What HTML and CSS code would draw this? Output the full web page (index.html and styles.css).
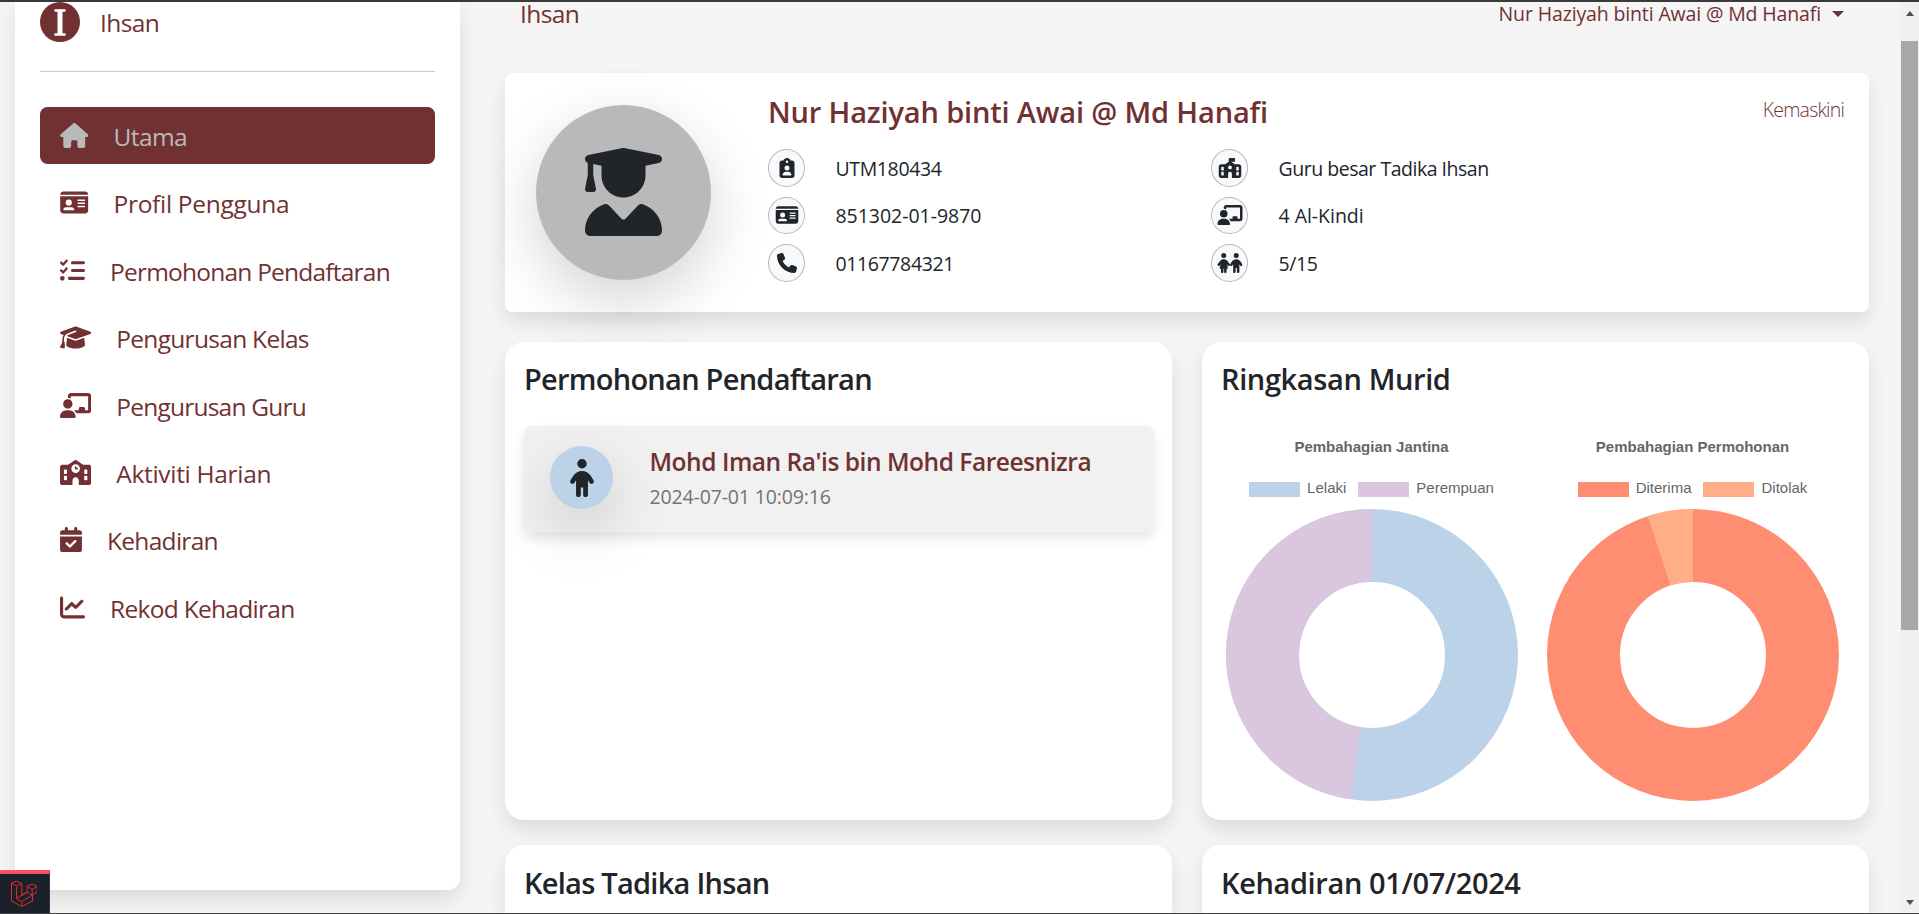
FILE: index.html
```
<!DOCTYPE html>
<html lang="ms">
<head>
<meta charset="utf-8">
<title>Ihsan</title>
<link rel="stylesheet" href="styles.css">
</head>
<body>
<svg class="sprite" aria-hidden="true">
  <symbol id="house" viewBox="0 0 576 512"><path d="M575.8 255.5c0 18-15 32.1-32 32.1h-32l.7 160.2c0 2.7-.2 5.4-.5 8.1V472c0 22.1-17.9 40-40 40H392c-22.1 0-40-17.9-40-40V384c0-17.7-14.3-32-32-32H256c-17.7 0-32 14.3-32 32v88c0 22.1-17.9 40-40 40H104c-22.1 0-40-17.9-40-40V287.6H32c-18 0-32-14-32-32.1c0-9 3-17 10-24L266.4 8c7-7 15-8 22-8s15 2 21 7L564.8 231.5c8 7 12 15 11 24z"/></symbol>
  <symbol id="idcard" viewBox="0 0 576 512"><path fill-rule="evenodd" d="M0 96H576c0-35.300-28.700-64-64-64H64C28.700 32 0 60.700 0 96zM0 128V416c0 35.300 28.700 64 64 64H512c35.300 0 64-28.700 64-64V128H0zM64 405.300c0-29.500 23.900-53.300 53.300-53.300H234.700c29.500 0 53.300 23.900 53.300 53.300c0 5.900-4.800 10.700-10.700 10.700H74.700c-5.900 0-10.700-4.800-10.700-10.700zM176 192a64 64 0 1 1 0 128 64 64 0 1 1 0-128zM352 208c0-8.800 7.200-16 16-16H496c8.800 0 16 7.200 16 16s-7.200 16-16 16H368c-8.800 0-16-7.200-16-16zM352 272c0-8.800 7.200-16 16-16H496c8.800 0 16 7.200 16 16s-7.200 16-16 16H368c-8.800 0-16-7.200-16-16zM352 336c0-8.800 7.200-16 16-16H496c8.800 0 16 7.200 16 16s-7.200 16-16 16H368c-8.800 0-16-7.200-16-16z"/></symbol>
  <symbol id="listcheck" viewBox="0 0 512 512"><path d="M152.100 38.200c9.900 8.900 10.700 24 1.800 33.900l-72 80c-4.400 4.900-10.600 7.800-17.200 7.900s-12.900-2.400-17.600-7L7 113C-2.300 103.600-2.300 88.400 7 79s24.600-9.400 33.900 0l22.100 22.100 55.100-61.200c8.900-9.900 24-10.700 33.900-1.800zM152.100 198.200c9.900 8.900 10.700 24 1.800 33.900l-72 80c-4.400 4.900-10.600 7.800-17.200 7.900s-12.900-2.400-17.600-7L7 273c-9.300-9.400-9.300-24.600 0-34s24.600-9.400 33.900 0l22.100 22.100 55.100-61.200c8.900-9.900 24-10.700 33.900-1.800zM224 96c0-17.700 14.300-32 32-32H480c17.700 0 32 14.300 32 32s-14.300 32-32 32H256c-17.700 0-32-14.300-32-32zM224 256c0-17.700 14.300-32 32-32H480c17.700 0 32 14.300 32 32s-14.300 32-32 32H256c-17.700 0-32-14.300-32-32zM160 416c0-17.700 14.300-32 32-32H480c17.700 0 32 14.300 32 32s-14.300 32-32 32H192c-17.700 0-32-14.300-32-32zM48 368a48 48 0 1 1 0 96 48 48 0 1 1 0-96z"/></symbol>
  <symbol id="gradcap" viewBox="0 0 640 512"><path d="M320 32c-8.100 0-16.100 1.400-23.700 4.100L15.800 137.400C6.300 140.900 0 149.900 0 160s6.300 19.100 15.800 22.600l57.900 20.900C57.300 229.300 48 259.800 48 291.900v28.100c0 28.400-10.800 57.700-22.300 80.800c-6.500 13-13.900 25.800-22.500 37.600C0 442.700-.9 448.300 .9 453.400s6 8.900 11.200 10.200l64 16c4.200 1.100 8.700 .3 12.400-2s6.300-6.100 7.100-10.400c8.600-42.800 4.300-81.200-2.100-108.700C90.300 344.300 86 329.800 80 316.500V291.900c0-30.200 10.200-58.700 27.900-81.500c12.900-15.500 29.600-28 49.200-35.700l157-61.700c8.200-3.200 17.500 .8 20.700 9s-.8 17.500-9 20.700l-157 61.700c-12.400 4.900-23.300 12.400-32.200 21.600l159.600 57.600c7.600 2.700 15.600 4.100 23.700 4.100s16.100-1.400 23.700-4.100L624.200 182.600c9.500-3.400 15.800-12.500 15.800-22.600s-6.300-19.100-15.800-22.600L343.700 36.100C336.100 33.400 328.100 32 320 32zM128 408c0 35.300 86 72 192 72s192-36.700 192-72L496.700 262.600 354.500 314c-11.100 4-22.800 6-34.500 6s-23.500-2-34.500-6L143.300 262.600 128 408z"/></symbol>
  <symbol id="teacher" viewBox="0 0 640 512"><path d="M160 64c0-35.300 28.700-64 64-64H576c35.300 0 64 28.700 64 64V352c0 35.300-28.700 64-64 64H336.800c-11.800-25.500-29.900-47.500-52.400-64H384V320c0-17.700 14.300-32 32-32h64c17.700 0 32 14.300 32 32v32h64V64H224v49.100C205.200 102.200 183.300 96 160 96V64zm0 64a96 96 0 1 1 0 192 96 96 0 1 1 0-192zM133.300 352h53.300C260.300 352 320 411.700 320 485.300c0 14.700-11.900 26.700-26.700 26.700H26.700C11.900 512 0 500.100 0 485.300C0 411.700 59.700 352 133.300 352z"/></symbol>
  <symbol id="school" viewBox="0 0 640 512"><path fill-rule="evenodd" d="M337.800 5.400C327-1.800 313-1.800 302.200 5.400L166.300 96H48C21.500 96 0 117.500 0 144V464c0 26.500 21.500 48 48 48H256V416c0-35.300 28.700-64 64-64s64 28.700 64 64v96H592c26.500 0 48-21.500 48-48V144c0-26.500-21.500-48-48-48H473.700L337.800 5.400zM96 192h32c8.800 0 16 7.200 16 16v64c0 8.800-7.200 16-16 16H96c-8.800 0-16-7.200-16-16V208c0-8.800 7.200-16 16-16zM512 192h32c8.800 0 16 7.200 16 16v64c0 8.800-7.200 16-16 16H512c-8.800 0-16-7.200-16-16V208c0-8.800 7.200-16 16-16zM96 320h32c8.800 0 16 7.200 16 16v64c0 8.800-7.200 16-16 16H96c-8.800 0-16-7.200-16-16V336c0-8.800 7.200-16 16-16zM512 320h32c8.800 0 16 7.200 16 16v64c0 8.800-7.200 16-16 16H512c-8.800 0-16-7.200-16-16V336c0-8.800 7.200-16 16-16zM232 176a88 88 0 1 1 176 0 88 88 0 1 1 -176 0zM320 128c-8.800 0-16 7.200-16 16v32c0 8.800 7.200 16 16 16h32c8.800 0 16-7.200 16-16s-7.200-16-16-16H336V144c0-8.800-7.200-16-16-16z"/></symbol>
  <symbol id="calendar" viewBox="0 0 448 512"><path fill-rule="evenodd" d="M128 0c17.700 0 32 14.300 32 32V64H288V32c0-17.700 14.300-32 32-32s32 14.300 32 32V64h48c26.500 0 48 21.500 48 48v48H0V112C0 85.500 21.500 64 48 64H96V32c0-17.700 14.300-32 32-32zM0 192H448V464c0 26.500-21.500 48-48 48H48c-26.500 0-48-21.500-48-48V192zM329 305c9.400-9.400 9.400-24.600 0-33.900s-24.600-9.400-33.900 0l-95 95-47-47c-9.400-9.400-24.600-9.400-33.900 0s-9.400 24.600 0 33.900l64 64c9.400 9.400 24.600 9.400 33.900 0L329 305z"/></symbol>
  <symbol id="chart" viewBox="0 0 512 512"><path d="M64 64c0-17.700-14.300-32-32-32S0 46.300 0 64V400c0 44.200 35.800 80 80 80H480c17.700 0 32-14.300 32-32s-14.300-32-32-32H80c-8.800 0-16-7.200-16-16V64zm406.600 86.600c12.500-12.500 12.500-32.800 0-45.300s-32.800-12.500-45.300 0L320 210.700l-57.400-57.400c-12.500-12.500-32.800-12.500-45.300 0l-112 112c-12.500 12.500-12.500 32.800 0 45.300s32.800 12.500 45.300 0L240 221.300l57.400 57.400c12.500 12.500 32.800 12.500 45.300 0l128-128z"/></symbol>
  <symbol id="graduate" viewBox="0 0 448 512"><path d="M219.300 .5c3.100-.6 6.300-.6 9.400 0l200 40C439.900 42.700 448 52.600 448 64s-8.100 21.300-19.300 23.500L352 102.900V160c0 70.700-57.300 128-128 128S96 230.700 96 160V102.900L48 93.300v65.100l15.700 78.400c.9 4.700-.3 9.600-3.300 13.300s-7.600 5.900-12.400 5.900H16c-4.800 0-9.300-2.100-12.400-5.900s-4.300-8.600-3.300-13.300L16 158.400V86.600C6.500 83.300 0 74.300 0 64C0 52.600 8.100 42.700 19.300 40.500l200-40zM111.900 327.700c10.500-3.400 21.800 .4 29.400 8.500l71 75.500c6.300 6.700 17 6.700 23.300 0l71-75.500c7.600-8.100 18.900-11.900 29.400-8.500C401 348.600 448 409.400 448 481.300c0 17-13.800 30.700-30.700 30.700H30.700C13.800 512 0 498.200 0 481.300c0-71.900 47-132.700 111.900-153.600z"/></symbol>
  <symbol id="clipuser" viewBox="0 0 384 512"><path fill-rule="evenodd" d="M192 0c-41.800 0-77.400 26.700-90.500 64H64C28.700 64 0 92.700 0 128V448c0 35.300 28.700 64 64 64H320c35.300 0 64-28.700 64-64V128c0-35.300-28.700-64-64-64H282.500C269.400 26.700 233.800 0 192 0zM192 64a32 32 0 1 1 0 64 32 32 0 1 1 0-64zM128 256a64 64 0 1 1 128 0 64 64 0 1 1 -128 0zM80 432c0-44.200 35.800-80 80-80h64c44.200 0 80 35.800 80 80c0 8.800-7.200 16-16 16H96c-8.800 0-16-7.200-16-16z"/></symbol>
  <symbol id="phone" viewBox="0 0 512 512"><path d="M164.900 24.600c-7.700-18.600-28-28.500-47.400-23.200l-88 24C12.100 30.200 0 46 0 64C0 311.400 200.600 512 448 512c18 0 33.800-12.100 38.600-29.500l24-88c5.300-19.400-4.600-39.700-23.200-47.400l-96-40c-16.300-6.800-35.200-2.100-46.300 11.600L304.700 368C234.300 334.700 177.300 277.700 144 207.300L193.300 167c13.700-11.200 18.400-30 11.600-46.300l-40-96z"/></symbol>
  <symbol id="schoolflag" viewBox="0 0 576 512"><path fill-rule="evenodd" d="M288 0H400c8.800 0 16 7.200 16 16V80c0 8.800-7.200 16-16 16H320.700l89.600 64H512c35.300 0 64 28.700 64 64V448c0 35.300-28.700 64-64 64H336V400c0-26.500-21.500-48-48-48s-48 21.500-48 48V512H64c-35.300 0-64-28.700-64-64V224c0-35.300 28.700-64 64-64H165.700L256 95.500V32c0-17.700 14.300-32 32-32zM336 240a48 48 0 1 0 -96 0 48 48 0 1 0 96 0zM80 224c-8.800 0-16 7.200-16 16v64c0 8.800 7.200 16 16 16h32c8.800 0 16-7.200 16-16V240c0-8.800-7.200-16-16-16H80zM464 224c-8.800 0-16 7.200-16 16v64c0 8.800 7.200 16 16 16h32c8.800 0 16-7.200 16-16V240c0-8.800-7.200-16-16-16H464zM80 352c-8.800 0-16 7.200-16 16v64c0 8.800 7.200 16 16 16h32c8.800 0 16-7.200 16-16V368c0-8.800-7.200-16-16-16H80zM464 352c-8.800 0-16 7.200-16 16v64c0 8.800 7.200 16 16 16h32c8.800 0 16-7.200 16-16V368c0-8.800-7.200-16-16-16H464z"/></symbol>
  <symbol id="child" viewBox="0 0 320 512"><path d="M96 64a64 64 0 1 1 128 0A64 64 0 1 1 96 64zm48 320v96c0 17.700-14.300 32-32 32s-32-14.300-32-32V287.800L59.100 321c-9.400 15-29.200 19.400-44.100 10S-4.500 301.900 4.900 287l39.900-63.300C69.700 184 113.200 160 160 160s90.300 24 115.200 63.600L315.100 287c9.400 15 4.900 34.700-10 44.100s-34.700 4.900-44.100-10L240 287.800V480c0 17.700-14.300 32-32 32s-32-14.300-32-32V384H144z"/></symbol>
  <symbol id="children" viewBox="0 0 640 512"><path d="M160 0a64 64 0 1 1 0 128A64 64 0 1 1 160 0zM88 480V400H70.200c-10.900 0-18.600-10.700-15.200-21.100l31.100-93.400L57.500 323.300c-10.700 14.100-30.800 16.800-44.800 6.200s-16.800-30.700-6.200-44.800L65.400 207c22.400-29.600 57.500-47 94.600-47s72.200 17.400 94.600 47l58.900 77.700c10.700 14.100 7.900 34.200-6.200 44.800s-34.200 7.900-44.800-6.200l-28.600-37.800L265 378.900c3.500 10.400-4.300 21.100-15.200 21.100H232v80c0 17.700-14.300 32-32 32s-32-14.300-32-32V400H152v80c0 17.700-14.300 32-32 32s-32-14.300-32-32z"/><use href="#child" x="320" y="0" width="320" height="512"/></symbol>
</svg>

<div class="page">
  <aside class="sidebar">
    <div class="brand">
      <svg class="logo" viewBox="0 0 40 40"><circle cx="20" cy="20" r="20" fill="#713133"/><path d="M14.500 8.500h11M14.500 32.500h11" stroke="#fff" stroke-width="2.400"/><path d="M20 8.500v24" stroke="#fff" stroke-width="5"/></svg>
      <span>Ihsan</span>
    </div>
    <nav class="nav">
      <a class="nav-item active"><svg class="w576"><use href="#house"/></svg><span>Utama</span></a>
      <a class="nav-item roomy"><svg class="w576"><use href="#idcard"/></svg><span>Profil Pengguna</span></a>
      <a class="nav-item tight"><svg class="w512"><use href="#listcheck"/></svg><span>Permohonan Pendaftaran</span></a>
      <a class="nav-item snug"><svg class="w640"><use href="#gradcap"/></svg><span>Pengurusan Kelas</span></a>
      <a class="nav-item tight"><svg class="w640"><use href="#teacher"/></svg><span>Pengurusan Guru</span></a>
      <a class="nav-item roomy"><svg class="w640"><use href="#school"/></svg><span>Aktiviti Harian</span></a>
      <a class="nav-item snug"><svg class="w448"><use href="#calendar"/></svg><span>Kehadiran</span></a>
      <a class="nav-item snug"><svg class="w512"><use href="#chart"/></svg><span>Rekod Kehadiran</span></a>
    </nav>
  </aside>

  <main class="main">
    <header class="topbar">
      <span class="crumb">Ihsan</span>
      <span class="user"><span>Nur Haziyah binti Awai @ Md Hanafi</span><i class="caret"></i></span>
    </header>

    <section class="profile">
      <div class="avatar"><svg><use href="#graduate"/></svg></div>
      <div class="details">
        <div class="details-head">
          <h1>Nur Haziyah binti Awai @ Md Hanafi</h1>
          <a class="edit">Kemaskini</a>
        </div>
        <div class="facts">
          <div class="fact"><b><svg><use href="#clipuser"/></svg></b><span>UTM180434</span></div>
          <div class="fact"><b><svg><use href="#schoolflag"/></svg></b><span class="snug-fact">Guru besar Tadika Ihsan</span></div>
          <div class="fact"><b><svg><use href="#idcard"/></svg></b><span class="wide-fact">851302-01-9870</span></div>
          <div class="fact"><b><svg><use href="#teacher"/></svg></b><span class="wide-fact">4 Al-Kindi</span></div>
          <div class="fact"><b><svg><use href="#phone"/></svg></b><span>01167784321</span></div>
          <div class="fact"><b><svg><use href="#children"/></svg></b><span>5/15</span></div>
        </div>
      </div>
    </section>

    <div class="grid">
      <section class="card">
        <h2>Permohonan Pendaftaran</h2>
        <div class="request">
          <div class="kid"><svg><use href="#child"/></svg></div>
          <div class="request-text">
            <strong>Mohd Iman Ra'is bin Mohd Fareesnizra</strong>
            <time>2024-07-01 10:09:16</time>
          </div>
        </div>
      </section>

      <section class="card">
        <h2 class="wide-title">Ringkasan Murid</h2>
        <div class="charts">
          <figure class="chart">
            <figcaption>Pembahagian Jantina</figcaption>
            <div class="legend"><span><i class="blue"></i>Lelaki</span><span><i class="lilac"></i>Perempuan</span></div>
            <svg class="donut" viewBox="-146 -146 292 292" fill="none" stroke-width="73"><circle r="109.500" stroke="#bbd2e8"/><circle r="109.500" pathLength="21" stroke="#dac6de" stroke-dasharray="10 11" transform="rotate(98.571)"/></svg>
          </figure>
          <figure class="chart">
            <figcaption>Pembahagian Permohonan</figcaption>
            <div class="legend"><span><i class="coral"></i>Diterima</span><span><i class="peach"></i>Ditolak</span></div>
            <svg class="donut" viewBox="-146 -146 292 292" fill="none" stroke-width="73"><circle r="109.500" stroke="#ff8d72"/><circle r="109.500" pathLength="20" stroke="#ffae87" stroke-dasharray="1 19" transform="rotate(252)"/></svg>
          </figure>
        </div>
      </section>

      <section class="card lower"><h2>Kelas Tadika Ihsan</h2></section>
      <section class="card lower"><h2 class="wide-title">Kehadiran 01/07/2024</h2></section>
    </div>
  </main>

  <div class="scrollbar"><i class="up"></i><i class="thumb"></i><i class="down"></i></div>
</div>

<div class="debugbar">
  <svg viewBox="0 0 26 27" fill="none" stroke="#e32b26" stroke-width="1"><path d="M.5 3 5.500 1 10.800 3.500 5.500 6.200zM.5 3v18l10.300 5.500L21.500 21v-6M5.500 6.200v12.300l5.300 3v5M10.800 3.500v11.500l5.400-2.800M5.500 18.300l10.700-6M10.800 21.300 21.500 15M16.200 6.500l5-2.600 5 2.600v5.600l-5 2.900-5-2.900zM16.200 6.500l5 2.800 5-2.800M21.200 9.300v5.500"/></svg>
</div>
</body>
</html>
```
FILE: styles.css
```
* { box-sizing: border-box; }
body {
  margin: 0;
  height: 914px;
  overflow: hidden;
  background: #f5f5f5;
  color: #212529;
  font-family: "Open Sans", "Noto Sans", sans-serif;
}
.sprite { display: none; }
svg { display: block; fill: currentColor; }
h1, h2, figure { margin: 0; }

.page {
  display: flex;
  height: 914px;
  border-top: 2px solid #3c393a;
  border-bottom: 1px solid #48484a;
}

/* Sidebar */
.sidebar {
  flex: none;
  width: 445px;
  height: 888px;
  margin-left: 15px;
  padding: 0 25px;
  background: #fff;
  border-radius: 0 0 12px 12px;
  box-shadow: 0 10px 20px rgba(0, 0, 0, .1);
  color: #713133;
}
.brand {
  display: flex;
  align-items: center;
  gap: 20px;
  height: 70px;
  padding-bottom: 30px;
  border-bottom: 1px solid #d4c6c7;
  font-size: 24.500px;
  letter-spacing: -.6px;
}
.logo { width: 40px; height: 40px; }
.brand span { padding-top: 1px; }
.nav { display: flex; flex-direction: column; gap: 10.400px; padding-top: 35px; }
.nav-item {
  display: flex;
  align-items: center;
  gap: 25px;
  height: 57px;
  padding-left: 20px;
  border-radius: 7.500px;
  font-size: 24.500px;
  letter-spacing: -.6px;
  white-space: nowrap;
}
.nav-item span { padding-top: 2px; }
.nav-item.active { background: #713133; color: #b9b9b9; }
.nav-item.roomy { letter-spacing: -.3px; }
.nav-item.snug { letter-spacing: -.7px; }
.nav-item.tight { letter-spacing: -.78px; }
.nav-item svg { height: 25px; }
.w448 { width: 22px; }
.w512 { width: 25px; }
.w576 { width: 28.500px; }
.w640 { width: 31.250px; }

/* Main column */
.main { flex: 1; min-width: 0; height: 911px; padding: 0 31px 0 45px; }
.topbar {
  display: flex;
  justify-content: space-between;
  height: 71px;
  padding: 0 25px 0 15px;
  color: #713133;
  white-space: nowrap;
}
.crumb { font-size: 24.500px; line-height: 24px; letter-spacing: -.6px; }
.user { display: flex; align-items: center; gap: 11px; height: 23px; font-size: 19.500px; letter-spacing: -.14px; }
.caret { border: 6px solid transparent; border-top-color: currentColor; border-bottom: 0; }

.profile {
  display: flex;
  gap: 57px;
  width: 1364px;
  height: 239px;
  padding: 0 25px 0 31px;
  background: #fff;
  border-radius: 7.500px;
  box-shadow: 0 10px 20px rgba(0, 0, 0, .1);
}
.avatar {
  flex: none;
  display: grid;
  place-items: center;
  width: 175px;
  height: 175px;
  margin-top: 32px;
  padding-bottom: 1px;
  border-radius: 50%;
  background: #b9b9b9;
  box-shadow: 0 20px 60px rgba(0, 0, 0, .175);
}
.avatar svg { width: 77px; height: 88px; }
.details { flex: 1; white-space: nowrap; }
.details-head { display: flex; justify-content: space-between; height: 76px; padding-top: 19px; }
h1 { font-size: 29px; font-weight: 600; line-height: 40px; letter-spacing: -.16px; color: #713133; }
.edit { font-size: 19.500px; font-weight: 300; line-height: 35px; color: #713133; letter-spacing: -.8px; }
.facts { display: grid; grid-template-columns: 443px 1fr; row-gap: 10px; }
.fact { display: flex; align-items: center; gap: 30.500px; height: 37.500px; font-size: 19.500px; letter-spacing: -.38px; }
.fact span { padding-top: 1px; }
.fact .wide-fact { letter-spacing: -.03px; }
.fact .snug-fact { letter-spacing: -.48px; }
.fact b {
  display: grid;
  place-items: center;
  width: 37px;
  height: 37.500px;
  border: 1px solid #b9b9b9;
  border-radius: 50%;
  background: #f8f9fa;
}
.fact svg { width: 26px; height: 20px; }

/* Cards */
.grid {
  display: grid;
  grid-template-columns: 667px 667px;
  grid-template-rows: 478px 68px;
  gap: 25px 30px;
  padding-top: 30px;
}
.card {
  padding: 16px 18px 0 19px;
  background: #fff;
  border-radius: 19px;
  box-shadow: 0 10px 20px rgba(0, 0, 0, .1);
}
.card.lower { padding-top: 17px; border-radius: 19px 19px 0 0; }
h2 { font-size: 29px; font-weight: 600; line-height: 42px; letter-spacing: -.74px; white-space: nowrap; }
h2.wide-title { letter-spacing: -.38px; }
.request {
  display: flex;
  gap: 36.500px;
  height: 106px;
  margin-top: 26px;
  padding: 19px 26px;
  background: #f1f1f1;
  border-radius: 7.500px;
  box-shadow: 0 6px 12px rgba(0, 0, 0, .1);
}
.kid {
  display: grid;
  place-items: center;
  width: 63px;
  height: 63px;
  margin-top: 1px;
  border-radius: 50%;
  background: #bbd2e8;
  box-shadow: 0 20px 60px rgba(0, 0, 0, .175);
}
.kid svg { width: 24px; height: 38px; }
.request-text { display: flex; flex-direction: column; white-space: nowrap; }
.request-text strong { font-size: 24.500px; font-weight: 600; line-height: 33px; letter-spacing: -.46px; color: #713133; }
.request-text time { margin-top: 4px; font-size: 19.500px; line-height: 30px; letter-spacing: -.14px; color: #6c757d; }

.charts { display: grid; grid-template-columns: 292px 292px; gap: 29px; padding: 38px 0 0 4.500px; }
.chart { display: flex; flex-direction: column; align-items: center; font-family: "Liberation Sans", Arial, sans-serif; font-size: 15px; color: #666; }
figcaption { font-weight: 700; line-height: 18px; }
.legend { display: flex; gap: 12px; height: 16px; margin: 25px 0 12px; line-height: 14px; }
.legend span { display: flex; gap: 7px; }
.legend i { width: 51px; height: 15px; margin-top: 1px; }
.blue { background: #bbd2e8; }
.lilac { background: #dac6de; }
.coral { background: #ff8d72; }
.peach { background: #ffae87; }
.donut { width: 292px; height: 292px; fill: none; }

/* Page scrollbar */
.scrollbar { display: flex; flex-direction: column; align-items: center; width: 19px; background: #f0f0f0; }
.scrollbar .up { margin: 9px 0 25px; border: 4.500px solid transparent; border-top: 0; border-bottom: 5px solid #505050; }
.thumb { width: 17px; height: 589px; background: #a8a8a8; }
.down { margin-top: 270px; border: 4.500px solid transparent; border-bottom: 0; border-top: 5px solid #505050; }

/* Floating debug toggle */
.debugbar {
  position: absolute;
  left: 0;
  top: 870px;
  width: 50px;
  height: 43px;
  padding: 6px 11px;
  background: #1b202d;
  border-top: 4px solid #f9535f;
  border-right: 1px solid #2d3748;
}
.debugbar svg { width: 26px; height: 27px; fill: none; }
```
